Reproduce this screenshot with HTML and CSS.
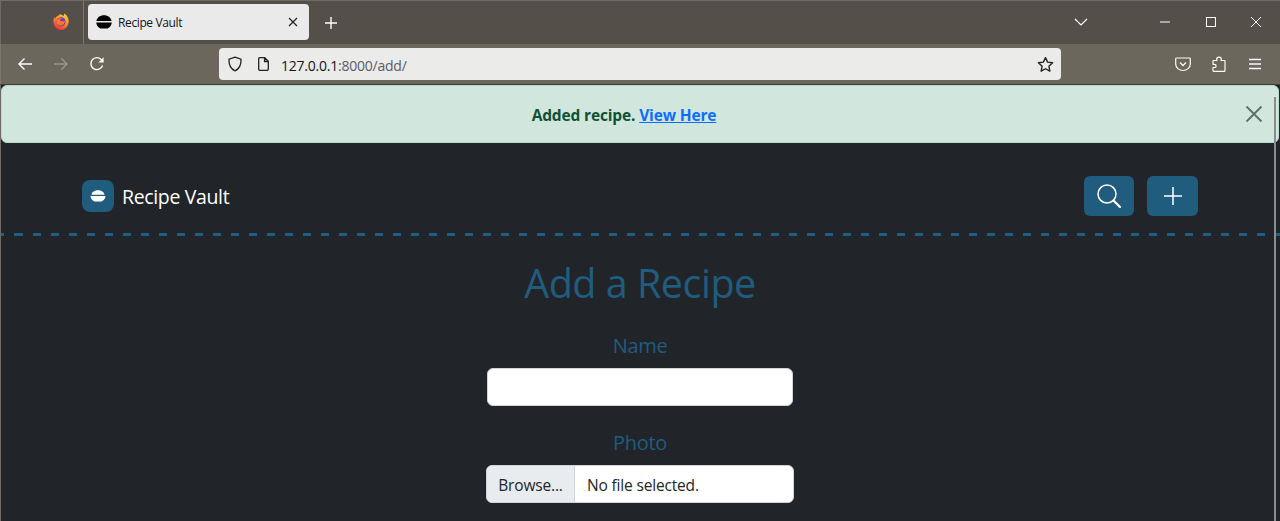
FILE: index.html
```html
<!DOCTYPE html>
<html lang="en">
<head>
<meta charset="utf-8">
<title>Recipe Vault</title>
<link rel="stylesheet" href="styles.css">
</head>
<body>
<div class="window">
  <div class="tabstrip">
    <div class="ff-slot">
      <svg class="ff" viewBox="0 0 16 18" width="16" height="18">
        <defs>
          <linearGradient id="ffg" x1="0.7" y1="0" x2="0.2" y2="1"><stop offset="0" stop-color="#ffd02e"/><stop offset=".45" stop-color="#ff8a24"/><stop offset="1" stop-color="#f0254f"/></linearGradient>
        </defs>
        <path d="M.3 7.500C.6 6 1 5 1.800 4c0 .8.2 1.300.5 1.600C3 3.600 4.800 2.400 6.500 2.200 6 1.800 6 1.300 6.300 1c1.500.6 3 .9 4.200 1.900.5-.6.800-1.500.7-2.500 2.500 1.500 4.600 4.200 4.500 8.100C15.500 13.300 12 17 8 17 3.500 17 .2 13 .3 7.500z" fill="url(#ffg)"/>
        <circle cx="8" cy="8.800" r="4.600" fill="#6f3bc9"/>
        <path d="M3.400 8c1.200-2.300 3.600-3.400 6-2.700-1.300.3-2.300.9-2.500 1.700-.1.900 1 1.400 2.800 1.300.9-.1 1.600-.3 2.300-.6-.2 2.900-2.300 4.900-4.700 4.800C5 12.400 3.200 10.400 3.400 8z" fill="#ff7a1c"/>
      </svg>
    </div>
    <div class="tab">
      <svg class="favicon" viewBox="0 0 16 16" width="16" height="16"><path d="M.4 6.900C1 3.500 4 1.200 8 1.200s7 2.300 7.600 5.700zM.2 8.500h15.600c-.3 2.800-2 5-4.300 6H4.500c-2.300-1-4-3.200-4.300-6z" fill="#000"/></svg>
      <span class="tab-title">Recipe Vault</span>
      <svg class="tab-close" viewBox="0 0 10 10" width="10" height="10"><path d="M1 1l8 8M9 1l-8 8" stroke="#222" stroke-width="1.200" fill="none"/></svg>
    </div>
    <svg class="newtab" viewBox="0 0 14 14" width="14" height="14"><path d="M7 1v12M1 7h12" stroke="#fff" stroke-width="1.400" fill="none"/></svg>
    <div class="strip-space"></div>
    <svg class="tablist" viewBox="0 0 14 8" width="14" height="8"><path d="M1 1l6 6 6-6" stroke="#fff" stroke-width="1.200" fill="none"/></svg>
    <div class="winbtns">
      <svg viewBox="0 0 12 12" width="12" height="12"><path d="M1 6h10" stroke="#fff" stroke-width="1"/></svg>
      <svg viewBox="0 0 12 12" width="12" height="12"><rect x="1.500" y="1.500" width="9" height="9" stroke="#fff" fill="none"/></svg>
      <svg viewBox="0 0 12 12" width="12" height="12"><path d="M1 1l10 10M11 1L1 11" stroke="#fff" stroke-width="1" fill="none"/></svg>
    </div>
  </div>
  <div class="toolbar">
    <div class="nav">
      <svg viewBox="0 0 16 16" width="16" height="16"><path d="M15 8H2M7.500 2.500L2 8l5.500 5.500" stroke="#fbfbfb" stroke-width="1.400" fill="none"/></svg>
      <svg viewBox="0 0 16 16" width="16" height="16"><path d="M1 8h13M8.500 2.500L14 8l-5.500 5.500" stroke="#9a978e" stroke-width="1.400" fill="none"/></svg>
      <svg viewBox="0 0 16 16" width="16" height="16"><path d="M13.600 9.500A6 6 0 1 1 12.400 3.600L14 5.500" stroke="#fbfbfb" stroke-width="1.400" fill="none"/><path d="M14.600 1.200v5.200H9.400z" fill="#fbfbfb"/></svg>
    </div>
    <div class="urlbar">
      <svg class="shield" viewBox="0 0 16 16" width="16" height="16"><path d="M8 1.200l6 2c.3 5.500-1.500 9.500-6 11.600C3.500 12.700 1.700 8.700 2 3.200z" stroke="#222" stroke-width="1.300" fill="none"/></svg>
      <svg class="page" viewBox="0 0 14 16" width="14" height="16"><path d="M2.700 1.700h5l3.600 3.600v8a1 1 0 0 1-1 1H2.700a1 1 0 0 1-1-1v-10.600a1 1 0 0 1 1-1zM7.500 1.700v3.800h3.800" stroke="#222" stroke-width="1.300" fill="none"/></svg>
      <span class="url"><span class="url-host">127.0.0.1</span>:8000/add/</span>
      <span class="url-space"></span>
      <svg class="star" viewBox="0 0 16 16" width="17" height="17"><path d="M8 1.500l2 4.300 4.700.6-3.500 3.200.9 4.700L8 12l-4.100 2.300.9-4.700L1.300 6.400 6 5.800z" stroke="#222" stroke-width="1.300" fill="none" stroke-linejoin="round"/></svg>
    </div>
    <div class="tools">
      <svg viewBox="0 0 16 16" width="16" height="16"><path d="M1.500 2h13a.800.800 0 0 1 .800.800V8a7.300 6.500 0 0 1-14.600 0V2.800a.800.800 0 0 1 .800-.800z" stroke="#fbfbfb" stroke-width="1.200" fill="none"/><path d="M5 6.500l3 3 3-3" stroke="#fbfbfb" stroke-width="1.300" fill="none"/></svg>
      <svg viewBox="0 0 16 16" width="16" height="16"><path d="M8 1.200c1.300 0 2.300 1 2.300 2.200 0 .4-.1.800-.3 1.100h3.300a.7.7 0 0 1 .7.700v9.600a.5.500 0 0 1-.5.500H2.500a.5.500 0 0 1-.5-.5V11.500h1.500a1.600 1.600 0 0 0 0-3.200H2V5.200a.7.7 0 0 1 .7-.7H6c-.2-.3-.3-.7-.3-1.100 0-1.200 1-2.200 2.300-2.200z" stroke="#fbfbfb" stroke-width="1.200" fill="none" stroke-linejoin="round"/></svg>
      <svg viewBox="0 0 16 16" width="16" height="16"><path d="M2 3.500h12M2 8h12M2 12.500h12" stroke="#fbfbfb" stroke-width="1.300" fill="none"/></svg>
    </div>
  </div>
  <div class="viewport">
    <div class="alert">
      <span class="alert-text"><strong>Added recipe. <a class="alert-link" href="#">View Here</a></strong></span>
      <svg class="alert-close" viewBox="0 0 18 18" width="18" height="18"><path d="M1.500 1.500l15 15M16.500 1.500l-15 15" stroke="#5f6f68" stroke-width="1.800" fill="none"/></svg>
    </div>
    <div class="scrollbar"></div>
    <header class="site-header">
      <a class="brand" href="#">
        <span class="brand-icon"><svg viewBox="0 0 16 16" width="16" height="16"><path d="M1.500 6.700C2 3.800 4.800 2.200 8 2.200s6 1.600 6.500 4.500zM.5 8h15c-.3 2.800-1.900 4.600-3.800 5.400H4.300C2.400 12.600.8 10.800.5 8z" fill="#fff"/></svg></span>
        <span class="brand-name">Recipe Vault</span>
      </a>
      <div class="header-actions">
        <button class="icon-btn search-btn" type="button"><svg viewBox="0 0 26 26" width="26" height="26"><circle cx="11" cy="11" r="9" stroke="#fff" stroke-width="1.500" fill="none"/><path d="M17.500 17.500l6.500 6.500" stroke="#fff" stroke-width="2.200" stroke-linecap="round"/></svg></button>
        <button class="icon-btn add-btn" type="button"><svg viewBox="0 0 20 20" width="20" height="20"><path d="M10 1v18M1 10h18" stroke="#fff" stroke-width="1.500"/></svg></button>
      </div>
    </header>
    <div class="dash-rule"></div>
    <main class="form-wrap">
      <h1 class="page-title">Add a Recipe</h1>
      <label class="field-label" for="name">Name</label>
      <input class="text-input" id="name" type="text">
      <label class="field-label photo-label">Photo</label>
      <div class="file-input">
        <span class="file-btn">Browse...</span>
        <span class="file-name">No file selected.</span>
      </div>
    </main>
  </div>
</div>
</body>
</html>
```
FILE: styles.css
```css
* { box-sizing: border-box; }
html, body { margin: 0; height: 100%; overflow: hidden; }
body { font-family: "Open Sans", "Noto Sans", "Liberation Sans", sans-serif; background: #212529; }
.window { width: 1280px; height: 521px; display: flex; flex-direction: column; overflow: hidden; }

.tabstrip { height: 44px; flex: none; background: #544f48; border-top: 1px solid #6e6b66; border-left: 1px solid #6e6b66; display: flex; align-items: flex-start; }
.ff-slot { width: 83px; height: 43px; flex: none; border-right: 1px solid #7a7670; display: flex; justify-content: flex-end; padding: 12px 14px 0 0; }
.tab { width: 221px; height: 36px; margin: 3px 0 0 4px; background: #eaeaea; border-radius: 4px; display: flex; align-items: center; padding: 0 11px 0 8px; flex: none; }
.favicon { flex: none; }
.tab-title { margin-left: 6px; font-family: "Open Sans", sans-serif; font-size: 12px; letter-spacing: -.38px; color: #15141a; flex: 1; }
.newtab { margin: 15px 0 0 15px; flex: none; }
.strip-space { flex: 1; }
.tablist { margin: 17px 0 0 0; flex: none; }
.winbtns { width: 192px; padding: 15px 18px 0 71px; display: flex; justify-content: space-between; flex: none; }

.toolbar { height: 41px; flex: none; background: #6b675c; border-left: 1px solid #7a7670; display: flex; align-items: center; border-bottom: 1px solid #3f3d38; }
.nav { width: 218px; display: flex; gap: 20px; padding-left: 16px; flex: none; }
.urlbar { width: 842px; height: 32px; background: #ebebea; border-radius: 4px; display: flex; align-items: center; padding: 0 7px 0 8px; flex: none; }
.shield { flex: none; }
.page { margin-left: 14px; flex: none; }
.url { margin-left: 10px; padding-top: 2px; font-size: 14px; letter-spacing: -.23px; color: #5b5b66; }
.url-host { color: #15141a; }
.url-space { flex: 1; }
.star { flex: none; }
.tools { flex: 1; display: flex; gap: 20px; padding-left: 114px; }

.viewport { flex: 1; position: relative; background: #212529; border-left: 1px solid #6e6b66; overflow: hidden; display: flex; flex-direction: column; }
.alert { height: 58px; flex: none; background: #d1e7dd; border: 1px solid #badbcc; border-radius: 6px; display: flex; align-items: center; justify-content: center; position: relative; margin-right: 1px; padding: 2px 48px 0 16px; }
.alert-text { font-size: 15.500px; color: #0f5132; letter-spacing: -.15px; }
.alert-link { color: #0d6efd; }
.alert-close { position: absolute; right: 15px; top: 19px; }
.scrollbar { position: absolute; top: 12px; right: 4px; bottom: 0; width: 2px; background: #8b8c8d; }

.site-header { height: 90px; flex: none; display: flex; align-items: center; justify-content: space-between; padding: 16px 82px 0 81px; }
.dash-rule { height: 3px; flex: none; background: repeating-linear-gradient(90deg, #1f5f85 0 8px, transparent 8px 18px) 14px 0; }
.brand { display: flex; align-items: center; gap: 8px; text-decoration: none; color: #fff; }
.brand-icon { width: 32px; height: 32px; border-radius: 8px; background: #1f5c7e; display: flex; align-items: center; justify-content: center; }
.brand-name { font-size: 19.500px; letter-spacing: -.35px; }
.header-actions { display: flex; gap: 13px; }
.icon-btn { height: 40px; padding: 0; border: 0; background: #1f5c7e; border-radius: 6px; display: flex; align-items: center; justify-content: center; }
.search-btn { width: 50px; }
.add-btn { width: 51px; }

.form-wrap { display: flex; flex-direction: column; align-items: center; flex: none; padding-right: 1px; }
.page-title { margin: 21px 0 0; font-size: 39.500px; font-weight: 400; line-height: 52px; color: #1f5c7e; letter-spacing: -.5px; }
.field-label { display: block; margin-top: 22px; font-size: 20px; line-height: 30px; color: #1f5c7e; letter-spacing: -.3px; }
.text-input { display: block; width: 306px; height: 38px; margin-top: 7px; background: #fff; border: 1px solid #ced4da; border-radius: 6px; }
.photo-label { margin-top: 22px; }
.file-input { width: 308px; height: 38px; margin-top: 7px; display: flex; background: #fff; border: 1px solid #ced4da; border-radius: 6px; overflow: hidden; font-size: 15.500px; letter-spacing: -.17px; color: #212529; }
.file-btn { width: 88px; flex: none; background: #e9ecef; border-right: 1px solid #ced4da; display: flex; align-items: center; justify-content: center; padding-top: 2px; }
.file-name { display: flex; align-items: center; padding: 2px 0 0 12px; }
```
